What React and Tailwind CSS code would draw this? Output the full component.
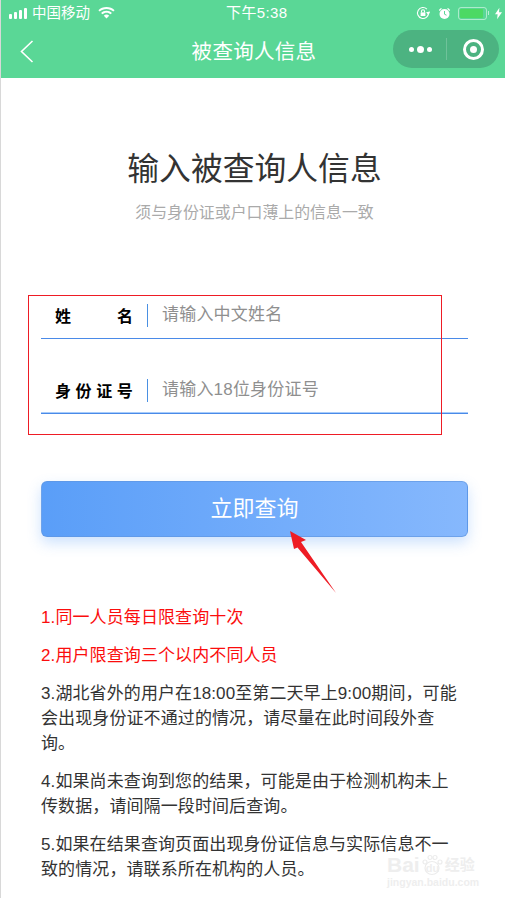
const font = "font-['Liberation_Sans','Noto_Sans_CJK_SC',sans-serif]";

const StatusBar = () => (
  <div className="relative flex h-[26px] items-center justify-between pl-2 pr-[3px] text-white">
    <div className="flex items-center">
      <div className="flex items-end gap-[2px]">
        <span className="h-[5px] w-[3px] rounded-[1px] bg-white" />
        <span className="h-[7px] w-[3px] rounded-[1px] bg-white" />
        <span className="h-[9px] w-[3px] rounded-[1px] bg-white" />
        <span className="h-[11px] w-[3px] rounded-[1px] bg-white" />
      </div>
      <span className="ml-[5px] text-[14.5px] leading-none">中国移动</span>
      <svg className="ml-2" width="17" height="12" viewBox="0 0 17 12" fill="white">
        <path d="M8.5 0C5.3 0 2.5 1.2.4 3.2l1.3 1.4C3.5 2.9 5.9 1.9 8.5 1.9s5 1 6.8 2.7l1.3-1.4C14.5 1.2 11.7 0 8.5 0z" />
        <path d="M8.5 3.8c-2.1 0-4 .8-5.4 2.1l1.3 1.4c1.1-1 2.5-1.6 4.1-1.6s3 .6 4.1 1.6l1.3-1.4C12.5 4.6 10.6 3.8 8.5 3.8z" />
        <path d="M8.5 7.6c-1 0-2 .4-2.7 1.1l2.7 2.9 2.7-2.9c-.7-.7-1.7-1.1-2.7-1.1z" />
      </svg>
    </div>
    <span className="absolute left-[225px] top-[5px] text-[15px] leading-[16px] tracking-[0.4px]">下午5:38</span>
    <div className="flex items-center">
      <svg width="14" height="14" viewBox="0 0 14 14" fill="none" stroke="white" strokeWidth="1.1">
        <path d="M12.5 7a5.5 5.5 0 1 1-1.6-3.9" />
        <path d="M13.3 6.2 12.4 8l-1.3-1.4z" fill="white" />
        <rect x="4.6" y="6.4" width="4.8" height="3.6" fill="white" stroke="none" />
        <path d="M5.5 6.4V5.2a1.5 1.5 0 0 1 3 0v1.2" />
      </svg>
      <svg className="ml-[8px]" width="13" height="13" viewBox="0 0 13 13" fill="white">
        <circle cx="6.5" cy="7" r="5" />
        <path d="M.8 3 3 .9l.9.9L1.7 3.9zM12.2 3 10 .9l-.9.9 2.2 2.1z" />
        <path d="M6.5 4v3.2l2 1" fill="none" stroke="#5ad796" strokeWidth="1" />
      </svg>
      <div className="ml-[7px] flex h-[13px] w-[29px] items-center rounded-[3px] border border-white/50 p-[1px]">
        <div className="h-full w-[23px] rounded-[1px] bg-[#4cd964]" />
      </div>
      <span className="ml-[1px] h-[4px] w-[1px] bg-white/60" />
      <svg className="ml-[6px]" width="7" height="13" viewBox="0 0 8 13" fill="white">
        <path d="M5 0 0 7.4h3L2.4 13 8 5.2H4.6z" />
      </svg>
    </div>
  </div>
);

const NavBar = () => (
  <div className="relative flex h-[52px] items-center justify-center">
    <svg className="absolute left-[19px] top-[14px]" width="14" height="23" viewBox="0 0 14 23" fill="none" stroke="white" strokeWidth="1.6">
      <path d="M12.5 1 1.5 11.5 12.5 22" />
    </svg>
    <h1 className="ml-[2px] text-[20.5px] font-normal leading-none tracking-[0.3px] text-white">被查询人信息</h1>
    <div className="absolute left-[392px] top-[4px] flex h-[38px] w-[106px] items-center rounded-full bg-[#4cb381]">
      <div className="flex w-[53px] items-center justify-center gap-[3px] pl-[1px]">
        <span className="h-[5px] w-[5px] rounded-full bg-white" />
        <span className="h-[7px] w-[7px] rounded-full bg-white" />
        <span className="h-[5px] w-[5px] rounded-full bg-white" />
      </div>
      <div className="h-[22px] w-px bg-white/20" />
      <div className="flex flex-1 items-center justify-center">
        <div className="flex h-[21px] w-[21px] items-center justify-center rounded-full border-[3px] border-white">
          <span className="h-[7px] w-[7px] rounded-full bg-white" />
        </div>
      </div>
    </div>
  </div>
);

const Field = ({ label, placeholder }) => (
  <div className="flex h-[75px] items-start border-b border-[#4a8ae8] pt-[40px] first:h-[35px] first:pt-0 last:shadow-[inset_0_-1px_0_#a8ccfa]">
    <div className="flex h-[25px] w-[106px] items-center">{label}</div>
    <div className="h-[23px] w-px bg-[#4a90e2]" />
    <span className="ml-[14px] text-[17px] leading-[22px] tracking-[0.2px] text-[#8f8f8f]">{placeholder}</span>
  </div>
);

const Note = ({ red, children }) => (
  <p className={`mb-[13px] text-[17px] leading-[25px] tracking-[0.1px] ${red ? "text-[#fb0d0d]" : "text-[#333]"}`}>{children}</p>
);

export default function App() {
  return (
    <div className={`relative h-[898px] w-[505px] overflow-hidden bg-white pl-[1px] ${font}`}>
      <div className="absolute left-0 top-0 h-full w-[1px] bg-[#d8d8d8]" />
      <header className="bg-[#5ad796]">
        <StatusBar />
        <NavBar />
      </header>

      <main className="px-10">
        <div className="w-[427px] pt-[71px] text-center">
          <h2 className="text-[31.8px] font-normal leading-[40px] text-[#333]">输入被查询人信息</h2>
          <p className="mt-[14px] text-[15.9px] leading-[20px] text-[#aaa]">须与身份证或户口薄上的信息一致</p>
        </div>

        <form className="mt-[81px] w-[427px]">
          <Field
            label={
              <span className="ml-[14px] flex w-[78px] justify-between text-[16px] font-bold leading-none text-black">
                <span>姓</span>
                <span>名</span>
              </span>
            }
            placeholder="请输入中文姓名"
          />
          <Field
            label={
              <span className="pl-[14px] text-[16px] font-bold leading-none tracking-[4.6px] text-black">身份证号</span>
            }
            placeholder="请输入18位身份证号"
          />
        </form>

        <button
          type="button"
          className="mt-[67px] block h-[56px] w-[427px] rounded-[6px] border border-[#5f94de]/60 bg-gradient-to-r from-[#5a9ef8] to-[#86b8fd] text-[22px] leading-none text-white shadow-[0_6px_14px_rgba(90,158,248,0.3)]"
        >
          立即查询
        </button>

        <div className="mt-[68px] w-[419px]">
          <Note red>1.同一人员每日限查询十次</Note>
          <Note red>2.用户限查询三个以内不同人员</Note>
          <Note>3.湖北省外的用户在18:00至第二天早上9:00期间，可能会出现身份证不通过的情况，请尽量在此时间段外查询。</Note>
          <Note>4.如果尚未查询到您的结果，可能是由于检测机构未上传数据，请间隔一段时间后查询。</Note>
          <Note>5.如果在结果查询页面出现身份证信息与实际信息不一致的情况，请联系所在机构的人员。</Note>
        </div>
      </main>

      {/* 标注框 */}
      <div className="absolute left-[28px] top-[295px] h-[140px] w-[414px] border border-[#ee1c25]" />

      {/* 箭头 */}
      <svg className="absolute left-[285px] top-[525px]" width="55" height="72" viewBox="0 0 55 72" fill="#ee1c25">
        <path d="M5 6 21 15 16 17 51 68 12.5 22.5 9 24z" />
      </svg>

      {/* 水印 */}
      <div className="absolute left-[387px] top-[853px] w-[92px] text-[#eeeeee]">
        <div className="flex h-[23px] items-center text-[21px] font-bold leading-none">
          <span>Bai</span>
          <div className="relative h-[22px] w-[24px]">
            <svg className="absolute left-0 top-0" width="24" height="22" viewBox="0 0 22 22" fill="none" stroke="#ececec" strokeWidth="1.2">
              <ellipse cx="11" cy="14" rx="7" ry="6.5" />
              <circle cx="4" cy="8" r="2" />
              <circle cx="9" cy="3.5" r="2" />
              <circle cx="14" cy="3.5" r="2" />
              <circle cx="19" cy="8" r="2" />
            </svg>
            <span className="absolute left-[6px] top-[9px] text-[11px] leading-none">du</span>
          </div>
          <span className="ml-[1px] text-[15px]">经验</span>
        </div>
        <div className="mt-[1px] whitespace-nowrap text-[10.5px] font-bold leading-[10px]">jingyan.baidu.com</div>
      </div>
    </div>
  );
}
